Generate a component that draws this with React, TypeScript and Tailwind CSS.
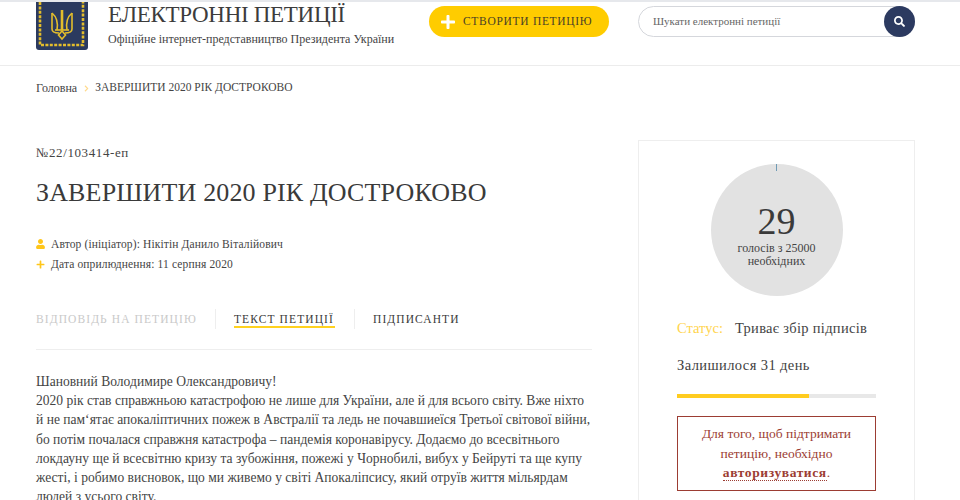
import { FaChevronRight, FaPlus, FaSearch, FaUser } from 'react-icons/fa'

const bodyLines = [
  'Шановний Володимире Олександровичу!',
  '2020 рік став справжньою катастрофою не лише для України, але й для всього світу. Вже ніхто',
  'й не пам‘ятає апокаліптичних пожеж в Австралії та ледь не почавшиеїся Третьої світової війни,',
  'бо потім почалася справжня катастрофа – пандемія коронавірусу. Додаємо до всесвітнього',
  'локдауну ще й всесвітню кризу та зубожіння, пожежі у Чорнобилі, вибух у Бейруті та ще купу',
  'жесті, і робимо висновок, що ми живемо у світі Апокаліпсису, який отруїв життя мільярдам',
  'людей з усього світу.'
]

/** Presidential seal: navy plate, gold rope border and a trident. */
function Logo() {
  return (
    <svg width="52" height="48" viewBox="0 0 52 48" className="block">
      <path d="M0 0H52V45a3 3 0 0 1-3 3H3a3 3 0 0 1-3-3Z" fill="#2b3a5f" />
      <path
        d="M4 0V43H47V0"
        fill="none"
        stroke="#e3bd2c"
        strokeWidth="2.6"
        strokeDasharray="3 1.4"
      />
      <g fill="none" stroke="#e3bd2c" strokeWidth="1.6">
        <path d="M26 8V28" strokeWidth="2.6" />
        <path d="M16 11V27C16 31 20 31 23 31" />
        <path d="M36 11V27C36 31 32 31 29 31" />
        <path d="M16 11C22 16 22 22 21 28" />
        <path d="M36 11C30 16 30 22 31 28" />
        <path d="M19 28H33" />
        <path d="M26 29L22.5 33 26 37 29.5 33Z" />
      </g>
    </svg>
  )
}

function Header() {
  return (
    <header className="flex h-[66px] items-start border-b border-[#ececec] border-t-2 border-t-[#e6e8ec] pl-[36px]">
      <Logo />
      <div className="ml-[20px] w-[321px]">
        <div className="mt-[-1px] text-[23px] leading-[28px] tracking-[-0.3px] whitespace-nowrap text-[#3c3c3c]">
          ЕЛЕКТРОННІ ПЕТИЦІЇ
        </div>
        <div className="mt-[2px] text-[12px] leading-[16px] whitespace-nowrap text-[#444]">
          Офіційне інтернет-представництво Президента України
        </div>
      </div>
      <button className="mt-[4px] flex h-[31px] w-[180px] items-center rounded-full bg-[#ffcc00] pl-[11px] text-[#4a4226]">
        <FaPlus className="text-[16px] text-white" />
        <span className="ml-[7px] text-[11.5px] tracking-[0.7px] whitespace-nowrap">СТВОРИТИ ПЕТИЦІЮ</span>
      </button>
      <div className="mt-[4px] ml-[29px] flex h-[31px] w-[277px] items-center justify-between rounded-full border border-[#d5d7dc]">
        <span className="ml-[14px] text-[11px] text-[#666]">Шукати електронні петиції</span>
        <span className="mr-[-1px] flex h-[31px] w-[31px] items-center justify-center rounded-full bg-[#2c3a60]">
          <FaSearch className="text-[11px] text-white" />
        </span>
      </div>
    </header>
  )
}

function PetitionMain() {
  return (
    <main className="w-[556px]">
      <div className="mt-[35px] text-[13px] leading-[16px] tracking-[0.6px] text-[#444]">№22/103414-еп</div>
      <h1 className="mt-[17px] text-[26px] leading-[30px] tracking-[0.15px] whitespace-nowrap text-[#3a3a3a]">
        ЗАВЕРШИТИ 2020 РІК ДОСТРОКОВО
      </h1>
      <div className="mt-[26px] flex items-center text-[11.5px] leading-[20px] tracking-[0.13px] text-[#444]">
        <FaUser className="mr-[6px] h-[10px] w-[9px] text-[#ffc61a]" />
        <span>Автор (ініціатор): Нікітін Данило Віталійович</span>
      </div>
      <div className="flex items-center text-[11.5px] leading-[20px] tracking-[0.13px] text-[#444]">
        <FaPlus className="mr-[6px] h-[9px] w-[9px] text-[#ffc61a]" />
        <span>Дата оприлюднення: 11 серпня 2020</span>
      </div>
      <nav className="mt-[35px] flex h-[20px] items-start text-[11.5px] tracking-[1.1px] whitespace-nowrap">
        <span className="w-[180px] border-r border-[#eeeeee] leading-[20px] text-[#c9c9c9]">ВІДПОВІДЬ НА ПЕТИЦІЮ</span>
        <span className="ml-[18px] h-[19px] w-[101px] border-b-2 border-[#ffd21f] leading-[20px] text-[#3a3a3a]">ТЕКСТ ПЕТИЦІЇ</span>
        <span className="ml-[19px] border-l border-[#eeeeee] pl-[18px] leading-[20px] text-[#3a3a3a]">ПІДПИСАНТИ</span>
      </nav>
      <div className="mt-[20px] border-t border-[#eeeeee]" />
      <div className="mt-[22px] text-[13.55px] leading-[19.2px] whitespace-nowrap text-[#444]">
        {bodyLines.map(line => (
          <div key={line}>{line}</div>
        ))}
      </div>
    </main>
  )
}

function Sidebar() {
  return (
    <aside className="mt-[30px] ml-[46px] h-[400px] w-[277px] border border-[#eeeeee] px-[38px]">
      <div className="relative mx-auto mt-[23px] flex h-[132px] w-[132px] flex-col items-center rounded-full bg-[#e2e2e2] pt-[36px] text-[#3a3a3a]">
        <span className="absolute top-0 left-[65px] h-[7px] w-px bg-[#6f9bb5]" />
        <span className="text-[38px] leading-[42px]">29</span>
        <span className="text-center text-[12px] leading-[12.5px] text-[#444]">
          голосів з 25000
          <br />
          необхідних
        </span>
      </div>
      <div className="mt-[22px] flex text-[14.5px] leading-[20px] whitespace-nowrap">
        <span className="text-[#ffd44d]">Статус:</span>
        <span className="ml-[12px] tracking-[0.3px] text-[#444]">Триває збір підписів</span>
      </div>
      <div className="mt-[17px] text-[14.5px] leading-[20px] tracking-[0.4px] text-[#3f3f3f]">Залишилося 31 день</div>
      <div className="mt-[19px] h-[4px] w-[199px] bg-[#e8e8e8]">
        <div className="h-full w-[132px] bg-[#ffcc1f]" />
      </div>
      <div className="mt-[18px] h-[75px] w-[199px] border border-[#9c3d33] pt-[7px] text-center text-[13.5px] leading-[19.5px] text-[#9c3d33]">
        Для того, щоб підтримати
        <br />
        петицію, необхідно
        <br />
        <span className="border-b border-dotted border-[#9c3d33] font-bold tracking-[0.6px]">авторизуватися</span>.
      </div>
    </aside>
  )
}

export default function App() {
  return (
    <div className="h-[500px] w-[960px] overflow-hidden bg-white font-['Liberation_Serif',serif]">
      <Header />
      <div className="flex h-[44px] items-center pl-[36px] text-[#444]">
        <span className="text-[12px]">Головна</span>
        <span className="flex w-[18px] justify-center">
          <FaChevronRight className="h-[7px] w-[5px] text-[#ffd98a]" />
        </span>
        <span className="text-[11.5px]">ЗАВЕРШИТИ 2020 РІК ДОСТРОКОВО</span>
      </div>
      <div className="flex pl-[36px]">
        <PetitionMain />
        <Sidebar />
      </div>
    </div>
  )
}
